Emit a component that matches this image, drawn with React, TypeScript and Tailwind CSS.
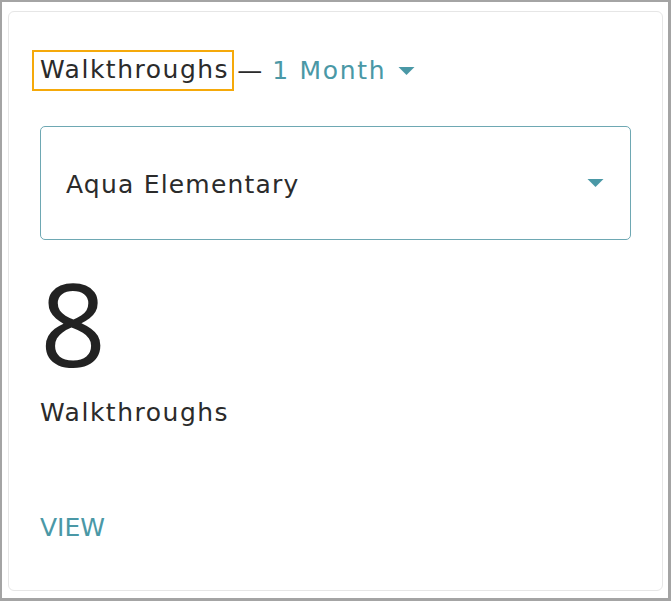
function Caret({ className }: { className?: string }) {
  return (
    <svg viewBox="0 0 10 5" className={className} aria-hidden>
      <path d="M0 0h10L5 5z" fill="currentColor" />
    </svg>
  );
}

export default function App() {
  return (
    <div
      className="h-[601px] w-[671px] border-t-2 border-l-2 border-r-[3px] border-b-[3px] border-[#a4a4a4] bg-white pt-[9px] pl-[6px] pr-[5px] pb-[7px]"
      style={{ fontFamily: '"DejaVu Sans", "Noto Sans", sans-serif' }}
    >
      <div className="flex h-full w-full flex-col rounded-[6px] border border-[#e6e6e6] bg-white px-[31px] pt-[38px]">
        {/* header */}
        <div className="flex items-center">
          <span className="-ml-[8px] border-2 border-[#f5a90a] pl-[6px] pr-[3px] pt-[2px] pb-[3px] text-[25px] leading-[32px] tracking-[1.5px] text-[#2b2b2b]">
            Walkthroughs
          </span>
          <span className="ml-[3px] text-[25px] leading-[32px] text-[#2b2b2b]">—</span>
          <button type="button" className="ml-[10px] flex items-center text-[25px] leading-[32px] tracking-[1.7px] text-[#4a98a6]">
            1 Month
            <Caret className="ml-[12px] h-[8px] w-[17px]" />
          </button>
        </div>

        {/* select */}
        <div className="mt-[35px] flex h-[114px] items-center justify-between rounded-[5px] border border-[#6ea8b3] pl-[25px] pr-[26px]">
          <span className="pt-[4px] text-[25px] tracking-[1.2px] text-[#2b2b2b]">Aqua Elementary</span>
          <Caret className="h-[8px] w-[17px] text-[#4a98a6]" />
        </div>

        {/* stat */}
        <div
          className="mt-[24px] text-[116px] leading-[116px] text-[#222]"
          style={{ fontFamily: '"Open Sans", sans-serif' }}
        >
          8
        </div>
        <div className="mt-[17px] text-[25px] leading-[32px] tracking-[1.5px] text-[#2b2b2b]">Walkthroughs</div>

        <a className="mt-[83px] text-[25px] leading-[32px] text-[#4a98a6]">VIEW</a>
      </div>
    </div>
  );
}
